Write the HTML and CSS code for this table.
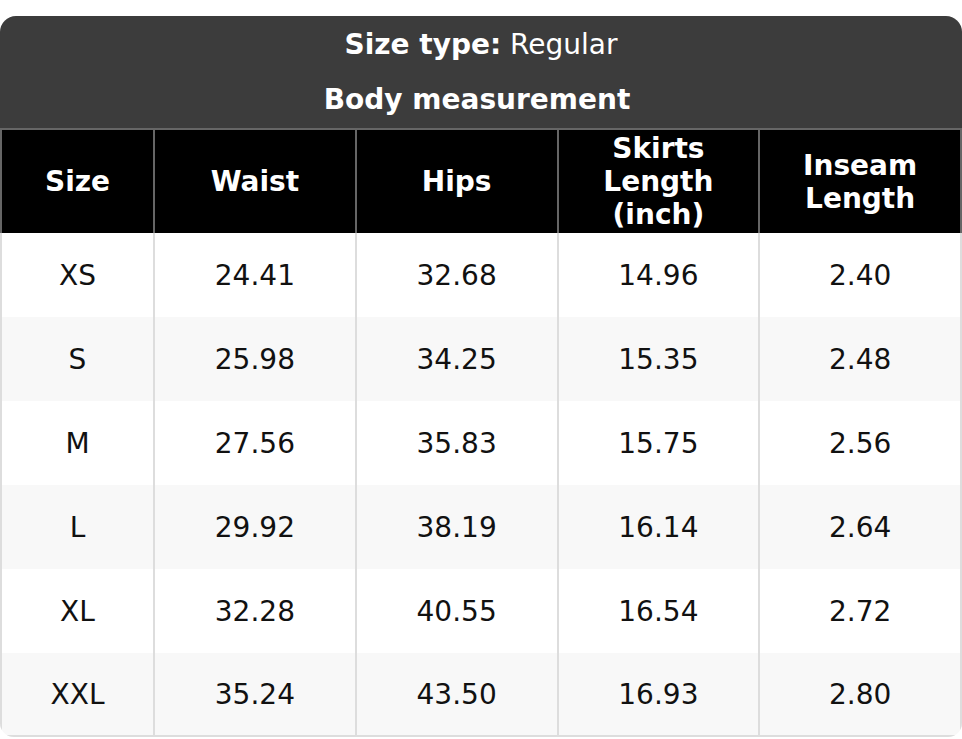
FILE: index.html
```html
<!DOCTYPE html>
<html>
<head>
<meta charset="utf-8">
<link rel="stylesheet" href="styles.css">
</head>
<body>
<div class="page">
  <div class="card">
    <table class="chart">
      <colgroup>
        <col class="c-size">
        <col class="c-val">
        <col class="c-val">
        <col class="c-val">
        <col class="c-val">
      </colgroup>
      <thead>
        <tr><th class="title" colspan="5"><b>Size type:</b> <span class="reg">Regular</span></th></tr>
        <tr><th class="title sub" colspan="5"><b>Body measurement</b></th></tr>
        <tr class="cols">
          <th>Size</th>
          <th>Waist</th>
          <th>Hips</th>
          <th>Skirts<br>Length<br>(inch)</th>
          <th>Inseam<br>Length</th>
        </tr>
      </thead>
      <tbody>
        <tr><td>XS</td><td>24.41</td><td>32.68</td><td>14.96</td><td>2.40</td></tr>
        <tr><td>S</td><td>25.98</td><td>34.25</td><td>15.35</td><td>2.48</td></tr>
        <tr><td>M</td><td>27.56</td><td>35.83</td><td>15.75</td><td>2.56</td></tr>
        <tr><td>L</td><td>29.92</td><td>38.19</td><td>16.14</td><td>2.64</td></tr>
        <tr><td>XL</td><td>32.28</td><td>40.55</td><td>16.54</td><td>2.72</td></tr>
        <tr><td>XXL</td><td>35.24</td><td>43.50</td><td>16.93</td><td>2.80</td></tr>
      </tbody>
    </table>
  </div>
</div>
</body>
</html>
```
FILE: styles.css
```css
html, body {
  margin: 0;
  padding: 0;
  background: #ffffff;
}
body {
  font-family: "DejaVu Sans", "Liberation Sans", sans-serif;
  font-size: 28px;
  color: #111111;
}
.page {
  padding-top: 16px;
}
.card {
  width: 962px;
  border-radius: 16px 16px 14px 14px;
  overflow: hidden;
  background: #ffffff;
}
.chart {
  width: 962px;
  border-collapse: separate;
  border-spacing: 0;
  table-layout: fixed;
}
.c-size { width: 155px; }
.chart th, .chart td {
  padding: 0;
  text-align: center;
  vertical-align: middle;
  line-height: 33px;
}
.title {
  background: #3c3c3c;
  color: #ffffff;
  height: 56px;
  font-weight: normal;
}
.title b { font-weight: bold; }
.chart .title.sub {
  padding-right: 8px;
  padding-bottom: 2px;
  height: 54px;
}
.cols th {
  background: #000000;
  color: #ffffff;
  font-weight: bold;
  height: 103px;
  border-top: 2px solid #666666;
  border-right: 2px solid #666666;
}
.cols th:first-child { border-left: 2px solid #666666; }
.chart td {
  height: 84px;
  border-right: 2px solid #dddddd;
}
.chart td:first-child { border-left: 2px solid #dddddd; }
.chart tbody tr:nth-child(even) td { background: #f8f8f8; }
.chart tbody tr:last-child td {
  height: 82px;
  border-bottom: 2px solid #dddddd;
}
```
